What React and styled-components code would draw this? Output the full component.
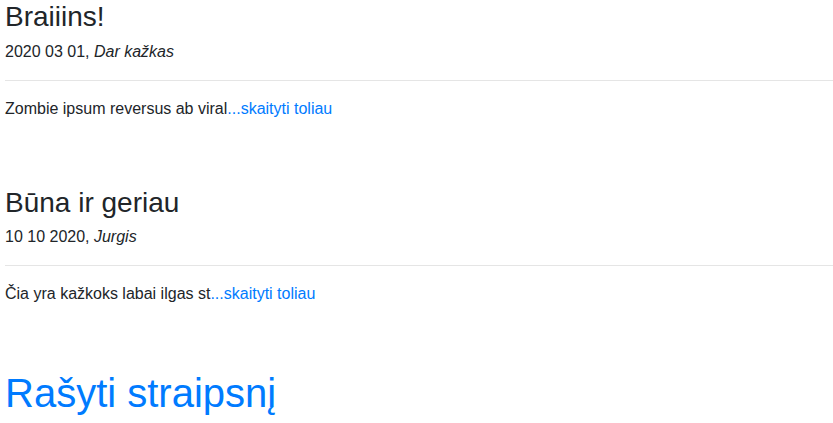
import React from 'react';
import styled, { createGlobalStyle } from 'styled-components';

const posts = [
  {
    id: 1,
    title: 'Braiiins!',
    date: '2020 03 01',
    author: 'Dar kažkas',
    excerpt: 'Zombie ipsum reversus ab viral',
  },
  {
    id: 2,
    title: 'Būna ir geriau',
    date: '10 10 2020',
    author: 'Jurgis',
    excerpt: 'Čia yra kažkoks labai ilgas st',
  },
];

const GlobalStyle = createGlobalStyle`
  body {
    margin: 0;
    font-family: "Liberation Sans", Arial, sans-serif;
    font-size: 16px;
    line-height: 1.5;
    color: #212529;
    background: #fff;
  }
`;

const Page = styled.main`
  padding: 0 0 0 5px;
`;

const Post = styled.article`
  display: flex;
  flex-direction: column;
  margin-bottom: 65px;
`;

const Title = styled.h3`
  margin: 0 0 6px;
  font-size: 28px;
  font-weight: 500;
  line-height: 1.2;
`;

const Meta = styled.p`
  margin: 0;

  em {
    font-style: italic;
  }
`;

const Divider = styled.hr`
  width: 100%;
  margin: 16px 0;
  border: 0;
  border-top: 1px solid rgba(0, 0, 0, 0.1);
`;

const Excerpt = styled.p`
  margin: 0;
`;

const Link = styled.a`
  color: #007bff;
  text-decoration: none;

  &:hover {
    color: #0056b3;
    text-decoration: underline;
  }
`;

const WriteLink = styled(Link)`
  display: inline-block;
  margin-top: -2px;
  font-size: 40px;
  line-height: 1.2;
`;

const PostItem = ({ post }) => (
  <Post>
    <Title>{post.title}</Title>
    <Meta>
      {post.date}, <em>{post.author}</em>
    </Meta>
    <Divider />
    <Excerpt>
      {post.excerpt}
      <Link href="#">...skaityti toliau</Link>
    </Excerpt>
  </Post>
);

const App = () => (
  <>
    <GlobalStyle />
    <Page>
      {posts.map(post => (
        <PostItem key={post.id} post={post} />
      ))}
      <WriteLink href="#">Rašyti straipsnį</WriteLink>
    </Page>
  </>
);

export default App;
